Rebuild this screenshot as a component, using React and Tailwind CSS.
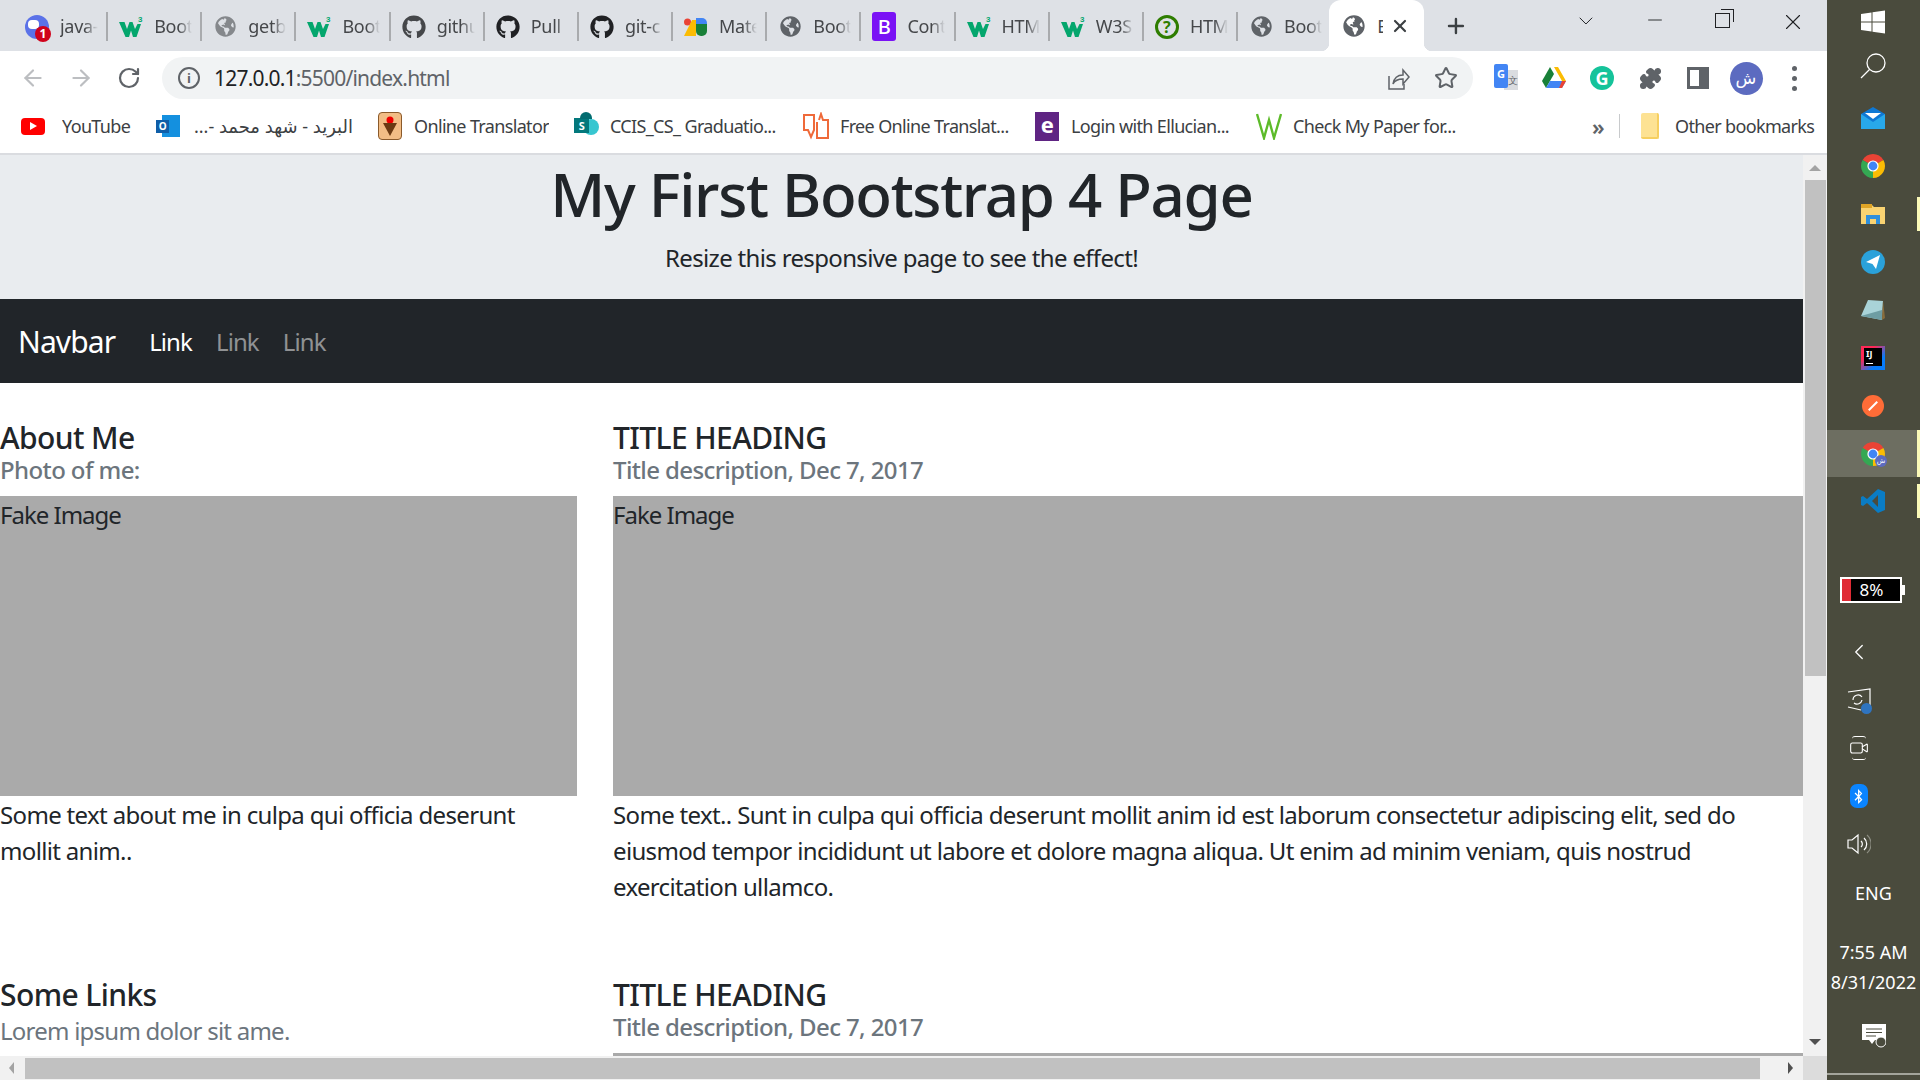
import React from 'react';
import { ArrowLeft, ArrowRight, RotateCw, Star, Puzzle, X, Plus, ChevronDown, Minus, ChevronLeft, Video } from 'lucide-react';
import { FaGlobeAmericas, FaGithub, FaBluetoothB } from 'react-icons/fa';

const uiFont = "font-['Noto_Sans','Liberation_Sans','DejaVu_Sans',sans-serif]";

function W3({ size = 24 }) {
  return (
    <svg width={size} height={size} viewBox="0 0 24 24">
      <polygon points="0,7 5.5,7 8,14 10.5,7 13.5,7 16,14 18.5,9 22,9 17.5,22 14,22 12,15.5 10,22 6.5,22" fill="#04a66d" />
      <text x="19" y="7" fontSize="8" fill="#04a66d" fontFamily="Liberation Sans" fontWeight="700">3</text>
    </svg>
  );
}

function Chrome({ size = 24, badge }) {
  return (
    <span className="relative inline-block">
      <svg width={size} height={size} viewBox="0 0 24 24" className="block">
        <path d="M12 12L1.61 6A12 12 0 0 1 22.39 6Z" fill="#ea4335" />
        <path d="M12 12L22.39 6A12 12 0 0 1 12 24Z" fill="#fbbc04" />
        <path d="M12 12L12 24A12 12 0 0 1 1.61 6Z" fill="#34a853" />
        <circle cx="12" cy="12" r="5.6" fill="#fff" />
        <circle cx="12" cy="12" r="4.4" fill="#4285f4" />
      </svg>
      {badge && (
        <span className="absolute -right-[2px] -bottom-[1px] w-[12px] h-[12px] rounded-full bg-[#5c6bc0] text-white text-[7px] leading-[12px] text-center">ش</span>
      )}
    </span>
  );
}

const Globe = ({ light }) => <FaGlobeAmericas size={21} className={light ? 'text-[#85888c]' : 'text-[#5f6368]'} />;
const Git = ({ dark }) => <FaGithub size={24} className={dark ? 'text-[#202124]' : 'text-[#45474a]'} />;

const tabs = [
  {
    title: 'java-',
    icon: (
      <span className="relative block w-[24px] h-[24px] rounded-full bg-[#5b72e8]">
        <span className="absolute left-[3px] top-[5px] w-[11px] h-[9px] rounded-[4px] bg-white" />
        <span className="absolute right-[-2px] bottom-[-3px] w-[16px] h-[16px] rounded-full bg-[#d0021b] text-white text-[12px] leading-[16px] font-bold text-center">1</span>
      </span>
    ),
  },
  { title: 'Boot', icon: <W3 /> },
  { title: 'getb', icon: <Globe light /> },
  { title: 'Boot', icon: <W3 /> },
  { title: 'githu', icon: <Git /> },
  { title: 'Pull', icon: <Git dark /> },
  { title: 'git-c', icon: <Git dark /> },
  {
    title: 'Mate',
    icon: (
      <svg width="24" height="24" viewBox="0 0 24 24">
        <circle cx="3.5" cy="7" r="3.5" fill="#ea4335" />
        <polygon points="0,21 8,5 12,5 12,21" fill="#fbbc04" />
        <path d="M12 3h6a5 5 0 0 1 5 5v1h-11z" fill="#4285f4" />
        <path d="M12 9h11v7a5 5 0 0 1-5 5h-1a5 5 0 0 1-5-5z" fill="#188038" />
      </svg>
    ),
  },
  { title: 'Boot', icon: <Globe /> },
  {
    title: 'Cont',
    icon: <span className="block w-[24px] h-[29px] rounded-[3px] bg-[#7a12f5] text-white text-[20px] leading-[29px] font-medium text-center">B</span>,
  },
  { title: 'HTM', icon: <W3 /> },
  { title: 'W3S', icon: <W3 /> },
  {
    title: 'HTM',
    icon: <span className="block w-[24px] h-[24px] rounded-full border-[3px] border-[#2e7d00] text-[#2e7d00] text-[16px] leading-[18px] font-bold text-center">?</span>,
  },
  { title: 'Boot', icon: <Globe /> },
];

function TabBar() {
  return (
    <div className="h-[51px] flex items-start bg-[#dee1e6] pl-[14px] shrink-0 relative">
      {tabs.map((t, i) => (
        <div key={i} className={`w-[94.17px] h-[29px] mt-[12px] flex items-center shrink-0 ${i < 13 ? 'border-r-2 border-[#a9abae]' : ''}`}>
          <span className="w-[46px] flex justify-center shrink-0">{t.icon}</span>
          <span className="w-[38px] overflow-hidden whitespace-nowrap text-[18px] tracking-[-0.3px] text-[#45474a] [mask-image:linear-gradient(to_right,black_65%,transparent)]">{t.title}</span>
        </div>
      ))}
      <div className="w-[95px] h-[51px] relative bg-white rounded-t-[12px] flex items-center shrink-0 -ml-[3px]">
        <span className="absolute -left-[8px] bottom-0 w-[8px] h-[8px] bg-[radial-gradient(circle_at_0_0,transparent_8px,white_8.5px)]" />
        <span className="absolute -right-[8px] bottom-0 w-[8px] h-[8px] bg-[radial-gradient(circle_at_100%_0,transparent_8px,white_8.5px)]" />
        <span className="ml-[13px] w-[24px] flex justify-center mt-[1px]"><FaGlobeAmericas size={22} className="text-[#5f6368]" /></span>
        <span className="ml-[11px] w-[6px] overflow-hidden text-[18px] text-[#45474a] mt-[1px]">B</span>
        <X size={20} strokeWidth={2.6} className="text-[#3c4043] ml-[7px] mt-[1px]" />
      </div>
      <Plus size={24} strokeWidth={2.4} className="text-[#3c4043] ml-[20px] mt-[14px]" />
      <ChevronDown size={24} strokeWidth={1} className="text-[#202124] ml-[106px] mt-[9px]" />
      <div className="w-[65px] ml-[25px] mt-[9px] flex justify-center"><Minus size={22} strokeWidth={1} className="text-[#202124]" /></div>
      <div className="w-[71px] mt-[11px] flex justify-center">
        <span className="relative block w-[15px] h-[15px] mt-[2px] border border-[#202124]">
          <span className="absolute -top-[5px] -right-[5px] w-[13px] h-[13px] border-t border-r border-[#202124]" />
        </span>
      </div>
      <div className="w-[69px] mt-[9px] flex justify-center"><X size={26} strokeWidth={1} className="text-[#202124]" /></div>
    </div>
  );
}

function Toolbar() {
  return (
    <div className="h-[54px] bg-white flex items-center shrink-0">
      <div className="w-[162px] flex items-center shrink-0 pl-[20px]">
        <ArrowLeft size={26} strokeWidth={2} className="text-[#bcbec1]" />
        <ArrowRight size={26} strokeWidth={2} className="text-[#bcbec1] ml-[22px]" />
        <RotateCw size={24} strokeWidth={2.2} className="text-[#5f6368] ml-[23px]" />
      </div>
      <div className="w-[1311px] h-[42px] rounded-full bg-[#f1f3f4] flex items-center shrink-0">
        <span className="ml-[16px] w-[22px] h-[22px] rounded-full border-2 border-[#5f6368] text-[#5f6368] text-[13px] leading-[18px] font-bold text-center">i</span>
        <span className="ml-[14px] mt-[2px] text-[21px] tracking-[-0.8px] whitespace-nowrap text-[#5f6368]"><span className="text-[#202124]">127.0.0.1</span>:5500/index.html</span>
        <svg width="26" height="26" viewBox="0 0 26 26" fill="none" stroke="#5f6368" strokeWidth="1.5" className="ml-auto mr-[24px]">
          <path d="M5 11v13h15v-5" />
          <path d="M9 19c1-6 5-9 10-9V5l6 7-6 7v-5c-4 0-8 1-10 5z" />
        </svg>
        <Star size={24} strokeWidth={2} className="text-[#5f6368] mr-[15px]" />
      </div>
      <div className="flex items-center ml-[9px]">
        <span className="w-[48px] flex justify-center">
          <span className="relative block w-[24px] h-[28px]">
            <span className="absolute right-0 top-[6px] w-[14px] h-[20px] bg-[#dadce0] text-[#5f6368] text-[10px] leading-[20px] text-right">文</span>
            <span className="absolute left-0 top-0 w-[14px] h-[24px] rounded-[2px] bg-[#4285f4] text-white text-[11px] leading-[20px] font-bold text-center">G</span>
          </span>
        </span>
        <span className="w-[48px] flex justify-center">
          <svg width="24" height="22" viewBox="0 0 24 22">
            <polygon points="8,0 16,0 24,14 20,14 12,0" fill="#fbbc04" />
            <polygon points="8,0 12,7 4,21 0,14" fill="#188038" />
            <polygon points="8,14 24,14 20,21 4,21" fill="#4285f4" />
            <polygon points="20,14 24,14 20,21 17,21" fill="#ea4335" />
          </svg>
        </span>
        <span className="w-[48px] flex justify-center">
          <span className="w-[24px] h-[24px] rounded-full bg-[#15c39a] text-white text-[18px] leading-[24px] font-bold text-center">G</span>
        </span>
        <span className="w-[48px] flex justify-center"><Puzzle size={23} className="text-[#5f6368] fill-[#5f6368]" /></span>
        <span className="w-[48px] flex justify-center">
          <span className="block w-[22px] h-[22px] border-[3px] border-r-[10px] border-[#5f6368]" />
        </span>
        <span className="w-[48px] flex justify-center">
          <span className="w-[33px] h-[33px] rounded-full bg-[#5c6bc0] text-white text-[17px] leading-[31px] text-center">ش</span>
        </span>
        <span className="w-[48px] flex flex-col items-center gap-[5px]">
          <i className="block w-[5px] h-[5px] rounded-full bg-[#5f6368]" />
          <i className="block w-[5px] h-[5px] rounded-full bg-[#5f6368]" />
          <i className="block w-[5px] h-[5px] rounded-full bg-[#5f6368]" />
        </span>
      </div>
    </div>
  );
}

const bookmarks = [
  {
    text: 'YouTube', cls: 'w-[70px] ml-[17px]',
    icon: <span className="flex items-center justify-center w-[24px] h-[17px] rounded-[4px] bg-[#f00]"><i className="block border-y-[4px] border-y-transparent border-l-[7px] border-l-white" /></span>,
  },
  {
    text: 'البريد - شهد محمد -...', cls: 'w-[160px] ml-[13px] text-right', rtl: true,
    icon: (
      <span className="relative block w-[24px] h-[22px]">
        <span className="absolute right-0 top-0 w-[18px] h-[22px] bg-[#1490df]" />
        <span className="absolute left-0 top-[5px] w-[13px] h-[13px] bg-[#0f5ea8] text-white text-[10px] leading-[13px] font-bold text-center">O</span>
      </span>
    ),
  },
  {
    text: 'Online Translator', cls: 'w-[135px] ml-[12px]',
    icon: (
      <span className="flex items-center justify-center w-[24px] h-[28px] rounded-[4px] bg-[#f2bd85] border border-[#8a5a2b]">
        <svg width="14" height="20" viewBox="0 0 14 20"><circle cx="7" cy="4" r="3.5" fill="#e00" /><polygon points="0,7 14,7 7,20" fill="#6b3a12" /></svg>
      </span>
    ),
  },
  {
    text: 'CCIS_CS_ Graduatio...', cls: 'w-[168px] ml-[11px]',
    icon: (
      <span className="relative block w-[25px] h-[28px]">
        <span className="absolute right-0 top-[7px] w-[16px] h-[16px] rounded-full bg-[#37c6d0]" />
        <span className="absolute left-0 top-[6px] w-[15px] h-[15px] bg-[#03787c] text-white text-[11px] leading-[15px] font-bold text-center">S</span>
        <span className="absolute left-[6px] top-0 w-[12px] h-[7px] rounded-t-full bg-[#036c70]" />
      </span>
    ),
  },
  {
    text: 'Free Online Translat...', cls: 'w-[170px] ml-[11px]',
    icon: (
      <svg width="26" height="28" viewBox="0 0 26 28" fill="none" stroke="#ef6a3a" strokeWidth="2">
        <path d="M12 3H1v15h4l3 7 3-7V3" />
        <path d="M14 10v16h11V8h-5l-2-6-2 6" />
      </svg>
    ),
  },
  {
    text: 'Login with Ellucian...', cls: 'w-[160px] ml-[12px]',
    icon: <span className="block w-[24px] h-[29px] bg-[#5f2483] text-white text-[22px] leading-[24px] font-bold text-center">e</span>,
  },
  {
    text: 'Check My Paper for...', cls: 'w-[168px] ml-[11px]',
    icon: <svg width="26" height="28" viewBox="0 0 26 28" fill="none" stroke="#5dbb2a" strokeWidth="2.4"><path d="M1 2l7 24 5-18 5 18 7-24" /></svg>,
  },
];

function BookmarksBar() {
  return (
    <div className="h-[48px] bg-white flex items-center pl-[21px] pb-[6px] shrink-0 text-[18px] tracking-[-0.65px] text-[#3c4043]">
      {bookmarks.map((b, i) => (
        <div key={i} className={`flex items-center ${i === 0 ? 'mr-[24px]' : 'mr-[25px]'} last:mr-0`}>
          {b.icon}
          <span dir={b.rtl ? 'rtl' : undefined} className={`${b.cls} whitespace-nowrap overflow-hidden`}>{b.text}</span>
        </div>
      ))}
      <span className="ml-[106px] text-[22px] leading-[22px] font-semibold text-[#5f6368]">»</span>
      <span className="ml-[15px] w-px h-[24px] bg-[#c8cacc]" />
      <span className="ml-[21px] w-[18px] h-[26px] rounded-[2px] bg-[#fde293] border-r-2 border-b-2 border-[#f6cf60]" />
      <span className="ml-[16px] w-[137px] whitespace-nowrap">Other bookmarks</span>
    </div>
  );
}

function Section({ title, sub, body }) {
  return (
    <div>
      <h5 className="text-[30px] leading-[36px] font-medium tracking-[-0.6px] text-[#212529]">{title}</h5>
      <h6 className="text-[24px] leading-[28px] font-medium tracking-[-0.6px] text-[#6c757d]">{sub}</h6>
      <div className="mt-[12px] h-[300px] pt-[1px] bg-[#aaaaaa] text-[24px] leading-[36px] tracking-[-1px] text-[#212529]">Fake Image</div>
      <p className="mt-[1px] text-[24px] leading-[36px] tracking-[-0.66px] text-[#212529]">{body}</p>
    </div>
  );
}

function Page() {
  return (
    <div className={`flex-1 min-w-0 overflow-hidden bg-white ${uiFont}`}>
      <div className="h-[144px] bg-[#e9ecef] text-center text-[#212529] pt-[3px]">
        <h1 className="text-[60px] leading-[72px] font-medium tracking-[-1.3px]">My First Bootstrap 4 Page</h1>
        <p className="mt-[10px] text-[24px] leading-[36px] tracking-[-0.66px]">Resize this responsive page to see the effect!</p>
      </div>
      <nav className="h-[84px] bg-[#212529] flex items-center pl-[18px] pt-[1px] text-[24px] tracking-[-0.9px]">
        <span className="text-[30px] text-white mr-[22px]">Navbar</span>
        <span className="px-[12px] text-white">Link</span>
        <span className="px-[12px] text-white/50">Link</span>
        <span className="px-[12px] text-white/50">Link</span>
      </nav>
      <div className="grid grid-cols-[577px_1190px] gap-x-[36px] gap-y-[72px] pt-[37px]">
        <Section title="About Me" sub="Photo of me:" body="Some text about me in culpa qui officia deserunt mollit anim.." />
        <Section
          title="TITLE HEADING"
          sub="Title description, Dec 7, 2017"
          body="Some text.. Sunt in culpa qui officia deserunt mollit anim id est laborum consectetur adipiscing elit, sed do eiusmod tempor incididunt ut labore et dolore magna aliqua. Ut enim ad minim veniam, quis nostrud exercitation ullamco."
        />
        <div>
          <h5 className="text-[30px] leading-[36px] font-medium tracking-[-0.6px] text-[#212529]">Some Links</h5>
          <p className="text-[24px] leading-[36px] tracking-[-0.76px] text-[#6c757d]">Lorem ipsum dolor sit ame.</p>
        </div>
        <div>
          <h5 className="text-[30px] leading-[36px] font-medium tracking-[-0.6px] text-[#212529]">TITLE HEADING</h5>
          <h6 className="text-[24px] leading-[28px] font-medium tracking-[-0.6px] text-[#6c757d]">Title description, Dec 7, 2017</h6>
          <div className="mt-[12px] h-[300px] bg-[#aaaaaa]" />
        </div>
      </div>
    </div>
  );
}

function VerticalScrollbar() {
  return (
    <div className="w-[24px] bg-[#f1f1f1] flex flex-col items-center shrink-0">
      <i className="block mt-[10px] border-x-[6px] border-x-transparent border-b-[6px] border-b-[#a3a3a3]" />
      <div className="mt-[9px] w-[21px] h-[496px] bg-[#c1c1c1]" />
      <i className="block mt-[363px] border-x-[6px] border-x-transparent border-t-[6px] border-t-[#505050]" />
    </div>
  );
}

function HorizontalScrollbar() {
  return (
    <div className="h-[24px] flex shrink-0">
      <div className="flex-1 bg-[#f1f1f1] flex items-center">
        <i className="block ml-[9px] border-y-[6px] border-y-transparent border-r-[5px] border-r-[#a3a3a3]" />
        <div className="ml-[11px] w-[1735px] h-[21px] bg-[#c1c1c1]" />
        <i className="block ml-[28px] border-y-[6px] border-y-transparent border-l-[5px] border-l-[#505050]" />
      </div>
      <div className="w-[24px] bg-[#dcdcdc]" />
    </div>
  );
}

function Row({ className = 'h-[48px]', children, mark }) {
  return (
    <div className={`relative flex items-center justify-center shrink-0 ${className}`}>
      {children}
      {mark}
    </div>
  );
}

const Mark = ({ className }) => <span className={`absolute right-0 w-[3px] bg-[#fbf9b8] ${className}`} />;

function Taskbar() {
  return (
    <div className={`w-[93px] h-full bg-[#4a4b3d] text-white flex flex-col shrink-0 overflow-hidden ${uiFont}`}>
      <Row className="h-[43px] pr-[1px]">
        <svg width="24" height="24" viewBox="0 0 24 24" fill="#fff"><polygon points="0,4 10.5,2.5 10.5,11.4 0,11.4" /><polygon points="11.5,2.3 24,0.5 24,11.4 11.5,11.4" /><polygon points="0,12.6 10.5,12.6 10.5,21.5 0,20" /><polygon points="11.5,12.6 24,12.6 24,23.5 11.5,21.7" /></svg>
      </Row>
      <Row className="h-[46px] pr-[1px]">
        <svg width="26" height="26" viewBox="0 0 26 26" fill="none" stroke="#fff" strokeWidth="1.3"><circle cx="16" cy="10" r="9" /><path d="M9.5 16.5L1 25" /></svg>
      </Row>
      <Row className="h-[48px] mt-[5px] pr-[1px]">
        <svg width="24" height="22" viewBox="0 0 24 22"><polygon points="0,7 12,0 24,7 24,22 0,22" fill="#0f78d4" /><polygon points="0,7 12,15 24,7 24,22 0,22" fill="#28a8ea" /><polygon points="4,6 20,6 12,12" fill="#fff" /></svg>
      </Row>
      <Row className="h-[48px] pr-[1px]"><Chrome /></Row>
      <Row className="h-[48px] pr-[1px]" mark={<Mark className="top-[7px] bottom-[7px]" />}>
        <svg width="24" height="20" viewBox="0 0 24 20"><path d="M0 0h10l3 3h11v17H0z" fill="#f9d372" /><rect x="0" y="0" width="11" height="4" fill="#e0a526" /><path d="M5 11h14v9h-4v-5H9v5H5z" fill="#2f8fdb" /></svg>
      </Row>
      <Row className="h-[48px] pr-[1px]">
        <svg width="24" height="24" viewBox="0 0 24 24"><circle cx="12" cy="12" r="12" fill="#2aa1da" /><polygon points="5,12 19,5 15,19 11.5,14" fill="#fff" /></svg>
      </Row>
      <Row className="h-[48px] pr-[1px]">
        <svg width="24" height="24" viewBox="0 0 24 24"><polygon points="7,2 22,3 21,22 0,18" fill="#a9d3d8" /><polygon points="0,18 21,22 21,12" fill="#6e9da3" /><polygon points="22,3 24,20 21,22" fill="#8a6d3b" /></svg>
      </Row>
      <Row className="h-[48px] pr-[1px]">
        <span className="relative block w-[24px] h-[24px] bg-[linear-gradient(135deg,#fe2857_30%,#087cfa_70%)]">
          <span className="absolute left-[3px] top-[2px] w-[18px] h-[18px] bg-black text-white text-[9px] leading-[11px] font-bold pl-[2px]">
            IJ
            <i className="absolute left-[2px] bottom-[2px] w-[7px] h-[1px] bg-white" />
          </span>
        </span>
      </Row>
      <Row className="h-[48px] pr-[1px]">
        <span className="w-[22px] h-[22px] rounded-full bg-[#ff6c37] flex items-center justify-center">
          <span className="block w-[12px] h-[2px] bg-white -rotate-45" />
        </span>
      </Row>
      <Row className="h-[47px] bg-[#6d6e61] pr-[1px]" mark={<Mark className="top-0 bottom-0" />}><Chrome badge /></Row>
      <Row className="h-[48px] pr-[1px]" mark={<Mark className="top-[7px] bottom-[7px]" />}>
        <svg width="24" height="24" viewBox="0 0 24 24"><path d="M17 0l7 3v18l-7 3L6 14l-4 3-2-1V8l2-1 4 3z" fill="#0a7cc4" /><path d="M17 6l-6 6 6 6z" fill="#4a4b3d" /></svg>
      </Row>

      <div className="mt-[52px] ml-[13px] w-[65px] h-[26px] flex shrink-0">
        <div className="w-[63px] h-full border-[2px] border-white bg-black flex items-center">
          <span className="w-[9px] h-full bg-[#e02b35]" />
          <span className="flex-1 text-center text-[17px] leading-[22px] pr-[8px]">8%</span>
        </div>
        <span className="w-[3px] h-[10px] mt-[8px] bg-white" />
      </div>
      <Row className="h-[48px] mt-[25px] pr-[30px]"><ChevronLeft size={26} strokeWidth={1.2} /></Row>
      <Row className="h-[48px] pr-[30px]">
        <span className="relative block">
          <svg width="24" height="24" viewBox="0 0 24 24" fill="none" stroke="#fff" strokeWidth="1.2">
            <path d="M1 4L23 1v17l-4 1M14 22L1 19z" />
            <path d="M6 12a5 5 0 0 1 9-3M15 12a5 5 0 0 1-8 3" />
          </svg>
          <i className="absolute -right-[1px] -bottom-[2px] w-[11px] h-[11px] rounded-full bg-[#2f74c0]" />
        </span>
      </Row>
      <Row className="h-[48px] pr-[30px]">
        <span className="relative flex items-center justify-center h-[24px]">
          <Video size={20} strokeWidth={1.3} />
          <i className="absolute top-0 left-[3px] right-[3px] h-[3px] rounded-t-full border-t border-white" />
          <i className="absolute bottom-0 left-[3px] right-[3px] h-[3px] rounded-b-full border-b border-white" />
        </span>
      </Row>
      <Row className="h-[48px] pr-[30px]">
        <span className="w-[18px] h-[24px] rounded-[7px] bg-[#0a84ff] flex items-center justify-center"><FaBluetoothB size={15} /></span>
      </Row>
      <Row className="h-[48px] pr-[30px]">
        <svg width="24" height="24" viewBox="0 0 24 24" fill="none" stroke="#fff" strokeWidth="1.2">
          <path d="M1 8h4l6-5v18l-6-5H1z" />
          <path d="M14 9a4 4 0 0 1 0 6M17 6a8 8 0 0 1 0 12" />
          <path d="M20 3a12 12 0 0 1 0 18" stroke="#8c8d82" />
        </svg>
      </Row>
      <Row className="h-[48px] text-[18px] pt-[3px]">ENG</Row>
      <div className="mt-[21px] text-center text-[18px] leading-[30px] whitespace-nowrap shrink-0">
        <div>7:55 AM</div>
        <div>8/31/2022</div>
      </div>
      <Row className="h-[48px] mt-[15px]">
        <svg width="24" height="24" viewBox="0 0 24 24" fill="#fff"><path d="M0 0h24v16h-11l-3 4-3-4H0z" /><g stroke="#4a4b3d" strokeWidth="1.2"><path d="M4 5h16M4 8.5h16M4 12h10" /></g><circle cx="19" cy="18" r="5" fill="#4a4b3d" stroke="#fff" /></svg>
      </Row>
      <div className="mt-[13px] h-[2px] bg-[#a3a49b] shrink-0" />
    </div>
  );
}

export default function App() {
  return (
    <div className="w-[1920px] h-[1080px] flex overflow-hidden">
      <div className="w-[1827px] h-full flex flex-col shrink-0">
        <div className={uiFont}>
          <TabBar />
          <Toolbar />
          <BookmarksBar />
          <div className="h-[2px] bg-[#dadce0]" />
        </div>
        <div className="flex-1 min-h-0 flex">
          <Page />
          <VerticalScrollbar />
        </div>
        <HorizontalScrollbar />
      </div>
      <Taskbar />
    </div>
  );
}
